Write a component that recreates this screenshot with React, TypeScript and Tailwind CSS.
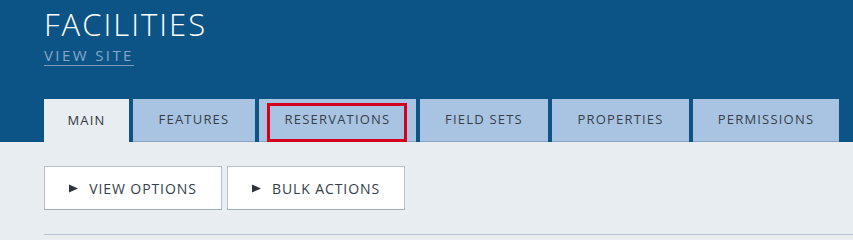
import React from "react";

const tabs = [
  { label: "MAIN", w: "w-[85px]" },
  { label: "FEATURES", w: "w-[122px]" },
  { label: "RESERVATIONS", w: "w-[157px]" },
  { label: "FIELD SETS", w: "w-[128px]" },
  { label: "PROPERTIES", w: "w-[137px]" },
  { label: "PERMISSIONS", w: "w-[146px]" },
];

const Caret = () => (
  <svg width="9" height="9" viewBox="0 0 9 9" className="shrink-0">
    <path d="M0 0.5 L9 4.5 L0 8.5 Z" fill="#2f343b" />
  </svg>
);

const App: React.FC = () => {
  const active = "MAIN";
  const marked = "RESERVATIONS";

  return (
    <div className="min-h-screen bg-[#e8edf2] font-['Open_Sans',sans-serif]">
      {/* header */}
      <div className="bg-[#0d5486] px-[44px] pt-[5px]">
        <h1 className="text-[31px] leading-[38px] tracking-[2px] font-light text-white">FACILITIES</h1>
        <a className="inline-block border-b border-[#7c9dc0] pb-[1px] text-[15px] leading-[18px] tracking-[2.4px] text-[#86a7c9]">
          VIEW SITE
        </a>
        <div className="mt-[32px] flex gap-[4px]">
          {tabs.map((t) => (
            <div
              key={t.label}
              className={
                t.label === active
                  ? `relative shrink-0 ${t.w} h-[43px] flex items-center justify-center whitespace-nowrap bg-[#e8edf2] text-[13px] tracking-[1.2px] text-[#2f3843]`
                  : `relative shrink-0 ${t.w} h-[43px] flex items-center justify-center whitespace-nowrap bg-[#a8c4e2] border-b border-[#8ea3bc] text-[13px] tracking-[1.2px] text-[#373f49]`
              }
            >
              {t.label}
              {t.label === marked && (
                <span className="pointer-events-none absolute left-[8px] right-[9px] top-[4px] bottom-[-1px] border-[3px] border-[#d4001f]" />
              )}
            </div>
          ))}
        </div>
      </div>

      {/* toolbar */}
      <div className="px-[44px] pt-[24px] flex gap-[5px]">
        <button className="h-[44px] w-[178px] flex items-center justify-center gap-[11px] bg-white border border-[#b3c1d0] border-b-[#9eaebf] text-[14px] tracking-[0.9px] text-[#353d48]">
          <Caret />
          VIEW OPTIONS
        </button>
        <button className="h-[44px] w-[178px] flex items-center justify-center gap-[11px] bg-white border border-[#b3c1d0] border-b-[#9eaebf] text-[14px] tracking-[0.9px] text-[#353d48]">
          <Caret />
          BULK ACTIONS
        </button>
      </div>

      <div className="ml-[44px] mt-[24px] h-[2px] border-t border-[#b6c4d4]" />
    </div>
  );
};

export default App;
